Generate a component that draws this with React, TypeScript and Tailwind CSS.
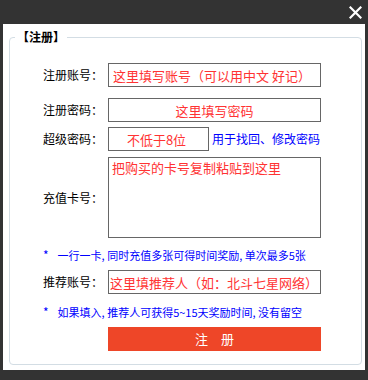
export default function App() {
  return (
    <div className="w-[368px] h-[380px] bg-[#333333] flex flex-col font-['Noto_Sans_CJK_SC',sans-serif] text-[12px] text-black [text-spacing-trim:space-all]">
      <div className="h-[24px] shrink-0 flex items-center justify-end pr-[6px]">
        <svg width="13" height="13" viewBox="0 0 13 13" className="mt-[1px]">
          <path d="M1.5 1.5 L11.5 11.5 M11.5 1.5 L1.5 11.5" stroke="#ffffff" strokeWidth="2.2" strokeLinecap="square" />
        </svg>
      </div>
      <div className="mx-[3px] h-[346px] bg-white flex flex-col">
        <div className="relative mt-[13px] ml-[6px] w-[353px] h-[328px] border border-[#d3dde4] rounded-[4px] pl-[33px]">
          <div className="absolute left-[5px] -top-[9px] bg-white px-[2px] leading-[16px] font-bold">【注册】</div>

          <div className="mt-[25px] flex items-center h-[24px]">
            <span className="w-[65px] shrink-0">注册账号：</span>
            <input
              readOnly
              placeholder="这里填写账号（可以用中文 好记）"
              className="w-[213px] h-[24px] border border-[#666666] pl-[4px] text-[13px] outline-none placeholder:text-[#ff3333]"
            />
          </div>

          <div className="mt-[11px] flex items-center h-[24px]">
            <span className="w-[65px] shrink-0">注册密码：</span>
            <input
              readOnly
              placeholder="这里填写密码"
              className="w-[213px] h-[24px] border border-[#666666] text-center text-[13px] outline-none placeholder:text-[#ff3333]"
            />
          </div>

          <div className="mt-[5px] flex items-center h-[24px]">
            <span className="w-[65px] shrink-0">超级密码：</span>
            <input
              readOnly
              placeholder="不低于8位"
              className="w-[101px] h-[24px] border border-[#666666] pr-[4px] text-center text-[13px] outline-none placeholder:text-[#ff3333]"
            />
            <span className="ml-[3px] text-[#0000ff]">用于找回、修改密码</span>
          </div>

          <div className="mt-[6px] flex items-center">
            <span className="w-[65px] shrink-0">充值卡号：</span>
            <textarea
              readOnly
              placeholder="把购买的卡号复制粘贴到这里"
              className="w-[213px] h-[81px] border border-[#666666] pt-[1px] pl-[3px] text-[13px] leading-[18px] resize-none outline-none placeholder:text-[#ff3333]"
            />
          </div>

          <p className="mt-[9px] h-[16px] leading-[16px] text-[11px] text-[#0000ff] whitespace-nowrap flex">
            <span className="text-[12px]">*</span>
            <span className="ml-[9px]">一行一卡, 同时充值多张可得时间奖励, 单次最多5张</span>
          </p>

          <div className="mt-[7px] flex items-center h-[24px]">
            <span className="w-[65px] shrink-0">推荐账号：</span>
            <input
              readOnly
              placeholder="这里填推荐人（如：北斗七星网络）"
              className="w-[213px] h-[24px] border border-[#666666] pl-[1px] text-[13px] outline-none placeholder:text-[#ff3333]"
            />
          </div>

          <p className="mt-[10px] h-[16px] leading-[16px] text-[11px] text-[#0000ff] whitespace-nowrap flex">
            <span className="text-[12px]">*</span>
            <span className="ml-[9px]">如果填入, 推荐人可获得5~15天奖励时间, 没有留空</span>
          </p>

          <div className="mt-[7px] flex">
            <button className="ml-[65px] w-[213px] h-[24px] bg-[#ee4628] text-white text-[13px] leading-[24px]">
              注　册
            </button>
          </div>
        </div>
      </div>
    </div>
  );
}
